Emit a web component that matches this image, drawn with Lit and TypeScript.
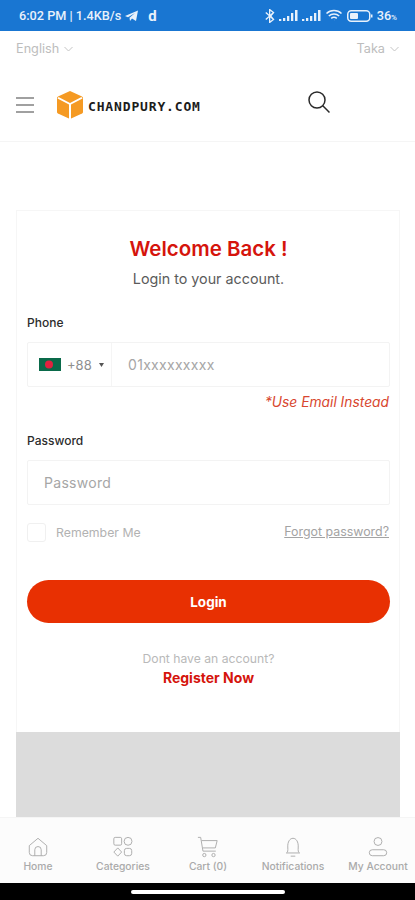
import { LitElement, css, html, svg } from 'lit';
import { customElement } from 'lit/decorators.js';

const navItems = [
  {
    label: 'Home',
    icon: svg`<path d="M2.500 10.500 12 2.500l9.500 8V18a3.500 3.500 0 0 1-3.500 3.500H6A3.500 3.500 0 0 1 2.500 18z"/><path d="M8.500 21.500V15a3.500 3.500 0 0 1 7 0v6.500"/>`,
  },
  {
    label: 'Categories',
    icon: svg`<rect x="2" y="1.500" width="8.500" height="8.500" rx="1.500"/><circle cx="17.500" cy="5.800" r="4.300"/><path d="M6.300 13 10.500 17.500 6.300 22 2 17.500z"/><rect x="13.500" y="13.500" width="8" height="8" rx="2.500"/>`,
  },
  {
    label: 'Cart (0)',
    icon: svg`<path d="M1 1.500h3l2.500 15h14M5 5h17l-2 8H6.500"/><circle cx="8" cy="20.800" r="1.800"/><circle cx="18" cy="20.800" r="1.800"/>`,
  },
  {
    label: 'Notifications',
    icon: svg`<path d="M4.800 18.500c1.700-.8 1.700-2.500 1.500-6.500C6 6.500 8.500 2.500 12 2.500s6 4 5.700 9.500c-.2 4-.2 5.700 1.500 6.500z"/><path d="M9.500 22h5"/>`,
  },
  {
    label: 'My Account',
    icon: svg`<circle cx="12" cy="6" r="4.300"/><rect x="2.500" y="15" width="19" height="6.500" rx="3.250"/>`,
  },
];

@customElement('app-root')
class AppRoot extends LitElement {
  static styles = css`
    :host {
      display: flex;
      flex-direction: column;
      width: 415px;
      height: 900px;
      overflow: hidden;
      background: #fff;
      font-family: Inter, 'Liberation Sans', sans-serif;
      color: #333;
    }

    .status {
      flex: none;
      height: 31px;
      box-sizing: border-box;
      padding: 0 18px 0 19px;
      display: flex;
      align-items: center;
      justify-content: space-between;
      background: #1976d2;
      color: #e8f1fb;
      font-family: Roboto, sans-serif;
      font-size: 12.7px;
      font-weight: 500;
    }

    .status-left,
    .status-right {
      display: flex;
      align-items: center;
    }

    .status-left {
      gap: 4px;
    }

    .status-right {
      gap: 4px;
    }

    .status svg {
      display: block;
      fill: currentColor;
    }

    .app-d {
      margin-left: 6px;
      font-size: 15px;
      font-weight: 700;
    }

    .topbar {
      flex: none;
      height: 35px;
      box-sizing: border-box;
      padding: 0 16px;
      display: flex;
      align-items: center;
      justify-content: space-between;
      color: #bdbdbd;
      font-size: 12.7px;
    }

    .picker {
      display: flex;
      align-items: center;
      gap: 5px;
    }

    .chev {
      display: block;
      fill: none;
      stroke: #c4c4c4;
      stroke-width: 1;
    }

    .header {
      flex: none;
      height: 76px;
      box-sizing: border-box;
      padding: 2px 0 0 16px;
      display: flex;
      align-items: center;
      border-bottom: 1px solid #f5f5f5;
    }

    .burger {
      width: 18px;
      display: flex;
      flex-direction: column;
      gap: 5px;
    }

    .burger i {
      display: block;
      height: 2px;
      background: #a0a0a0;
    }

    .logo {
      display: block;
      margin-left: 23px;
    }

    .brand {
      margin: 3px 0 0 5px;
      font-family: 'DejaVu Sans Mono', monospace;
      font-size: 13px;
      font-weight: 700;
      letter-spacing: 0.850px;
      color: #1c1c1c;
    }

    .search {
      display: block;
      margin: 0 0 5px 106px;
      fill: none;
      stroke: #2a2a2a;
      stroke-width: 1.500;
    }

    .page {
      flex: 1;
      min-height: 0;
      box-sizing: border-box;
      padding: 68px 15px 0 16px;
      display: flex;
      flex-direction: column;
    }

    .card {
      flex: 1;
      display: flex;
      flex-direction: column;
      border: 1px solid #f6f6f6;
      border-bottom: none;
    }

    .form {
      flex: 1;
      padding: 25px 9px 0 10px;
      display: flex;
      flex-direction: column;
    }

    h1 {
      margin: 0;
      text-align: center;
      font-size: 20.500px;
      line-height: 26px;
      font-weight: 600;
      color: #d5140c;
    }

    .sub {
      margin-top: 7px;
      text-align: center;
      font-size: 14.300px;
      line-height: 20px;
      color: #5b5b5b;
    }

    label {
      display: block;
      font-size: 12px;
      line-height: 16px;
      font-weight: 500;
      color: #2c2c2c;
    }

    .phone-label {
      margin-top: 26px;
    }

    .pass-label {
      margin-top: 22px;
    }

    .field {
      margin-top: 11px;
      height: 45px;
      box-sizing: border-box;
      display: flex;
      align-items: center;
      border: 1px solid #f3f3f3;
      border-radius: 2px;
      font-size: 14px;
      color: #a6a6a6;
    }

    .dial {
      width: 84px;
      height: 100%;
      box-sizing: border-box;
      padding-left: 11px;
      display: flex;
      align-items: center;
      gap: 6px;
      border-right: 1px solid #f5f5f5;
      font-size: 13px;
      color: #8f8f8f;
    }

    .flag {
      display: block;
      flex: none;
    }

    .caret {
      display: block;
      margin-left: 1px;
      fill: #555;
    }

    .field-text {
      padding-left: 16px;
      letter-spacing: 0.300px;
    }

    .email {
      margin-top: 6px;
      padding-right: 1px;
      text-align: right;
      font-size: 13.800px;
      line-height: 18px;
      font-style: italic;
      color: #d8472f;
    }

    .row {
      margin-top: 18px;
      display: flex;
      align-items: center;
    }

    .check {
      width: 17px;
      height: 17px;
      border: 1px solid #f0f0f0;
      border-radius: 3px;
    }

    .remember {
      margin-left: 10px;
      font-size: 12.300px;
      color: #b2b2b2;
    }

    .forgot {
      margin: -3px 1px 0 auto;
      font-size: 12.400px;
      color: #a3a3a3;
      text-decoration: underline;
    }

    .login {
      margin-top: 38px;
      height: 43px;
      display: flex;
      align-items: center;
      justify-content: center;
      border-radius: 22px;
      background: #e83002;
      color: #fff;
      font-size: 13.500px;
      font-weight: 700;
    }

    .noacc {
      margin-top: 28px;
      text-align: center;
      font-size: 12.200px;
      line-height: 16px;
      color: #b9b9b9;
    }

    .register {
      margin-top: 2px;
      text-align: center;
      font-size: 14px;
      line-height: 18px;
      font-weight: 700;
      color: #d5140c;
    }

    .banner {
      flex: none;
      height: 85px;
      margin: 0 -1px;
      background: #dcdcdc;
    }

    .nav {
      flex: none;
      height: 66px;
      box-sizing: border-box;
      padding: 18px 0 0 1px;
      display: flex;
      justify-content: center;
      background: #fcfcfc;
      border-top: 1px solid #f5f5f5;
    }

    .nav-item {
      flex: none;
      width: 85px;
      display: flex;
      flex-direction: column;
      align-items: center;
      gap: 2px;
      font-size: 10.300px;
      font-weight: 500;
      line-height: 12px;
      color: #aaaaaa;
      white-space: nowrap;
    }

    .nav-item svg {
      display: block;
      fill: none;
      stroke: #a8a8a8;
      stroke-width: 1;
    }

    .gesture {
      flex: none;
      height: 17px;
      display: flex;
      align-items: center;
      justify-content: center;
      background: #000;
    }

    .gesture i {
      display: block;
      width: 154px;
      height: 4px;
      border-radius: 2px;
      background: #fff;
    }
  `;

  render() {
    return html`
      <div class="status">
        <div class="status-left">
          <span>6:02 PM | 1.4KB/s</span>
          <svg width="13" height="12" viewBox="0 0 13 12"><path d="M0 6 13 .5 11 11 7 8.500 5 11 4.500 7.800 10 3 3 7.200z"/></svg>
          <span class="app-d">d</span>
        </div>
        <div class="status-right">
          <svg width="10" height="14" viewBox="0 0 10 14"><path d="M4 0h1l4.500 3.500L6.500 7l3 3.500L5 14H4V8.500L1.300 11 .3 10l3.500-3L.3 4l1-1L4 5.500zM5.300 2v3.500l2.300-2zm0 6.500V12l2.300-1.500z"/></svg>
          <svg width="19" height="11" viewBox="0 0 19 11"><path d="M0 9h2.300v2H0zM4 8h2.300v3H4zM8 6h2.300v5H8zM12 3h2.300v8H12zM16 0h2.500v11H16z"/></svg>
          <svg width="19" height="11" viewBox="0 0 19 11"><path d="M0 9h2.300v2H0zM4 8h2.300v3H4zM8 6h2.300v5H8zM12 3h2.300v8H12zM16 0h2.500v11H16z"/></svg>
          <svg width="18" height="13" viewBox="0 0 17 13" style="fill:none;stroke:currentColor;stroke-width:1.500"><path d="M1 4.500c4-4 11-4 15 0M3.300 7c3-2.800 7.400-2.800 10.400 0M5.700 9.400c1.600-1.400 4-1.400 5.600 0"/><path d="M8.500 11h.1"/></svg>
          <svg width="26" height="12" viewBox="0 0 26 12"><rect x=".75" y=".75" width="22" height="10.500" rx="3.500" fill="none" stroke="currentColor" stroke-width="1.500"/><rect x="3" y="3" width="8" height="6" rx="1"/><path d="M24 4.500h1.500v3H24z"/></svg>
          <span>36<small style="font-size:8px">%</small></span>
        </div>
      </div>

      <div class="topbar">
        <div class="picker">
          English
          <svg class="chev" width="9" height="6" viewBox="0 0 9 6"><path d="M.5 1l4 4 4-4"/></svg>
        </div>
        <div class="picker">
          Taka
          <svg class="chev" width="9" height="6" viewBox="0 0 9 6"><path d="M.5 1l4 4 4-4"/></svg>
        </div>
      </div>

      <div class="header">
        <div class="burger"><i></i><i></i><i></i></div>
        <svg class="logo" width="26" height="28" viewBox="0 0 26 28">
          <path d="M13 0 25 5.500Q26 6 26 7v14q0 1-1 1.500L13 28 1 22.500Q0 22 0 21V7q0-1 1-1.500z" fill="#f59a23"/>
          <path d="M1.500 6 13 12 24.500 6l1 1.500L14 13.500V28h-2V13.500L.5 7.500z" fill="#fff"/>
          <path d="M13 2.500 20 6l-7 3.500L6 6z" fill="#f59a23"/>
        </svg>
        <span class="brand">CHANDPURY.COM</span>
        <svg class="search" width="24" height="24" viewBox="0 0 24 24">
          <circle cx="10" cy="10" r="8"/>
          <path d="M15.800 15.800 22.500 22.500"/>
        </svg>
      </div>

      <div class="page">
        <div class="card">
          <div class="form">
            <h1>Welcome Back !</h1>
            <div class="sub">Login to your account.</div>

            <label class="phone-label">Phone</label>
            <div class="field">
              <div class="dial">
                <svg class="flag" width="22" height="13" viewBox="0 0 22 13">
                  <rect width="22" height="13" fill="#0a6a4a"/>
                  <circle cx="10" cy="6.500" r="4" fill="#e0213f"/>
                </svg>
                +88
                <svg class="caret" width="5" height="4" viewBox="0 0 5 4"><path d="M0 0h5L2.500 4z"/></svg>
              </div>
              <span class="field-text">01xxxxxxxxx</span>
            </div>
            <div class="email">*Use Email Instead</div>

            <label class="pass-label">Password</label>
            <div class="field">
              <span class="field-text">Password</span>
            </div>

            <div class="row">
              <div class="check"></div>
              <span class="remember">Remember Me</span>
              <span class="forgot">Forgot password?</span>
            </div>

            <div class="login">Login</div>
            <div class="noacc">Dont have an account?</div>
            <div class="register">Register Now</div>
          </div>
          <div class="banner"></div>
        </div>
      </div>

      <div class="nav">
        ${navItems.map(
          (item) => html`
            <div class="nav-item">
              <svg width="22" height="22" viewBox="0 0 24 24">${item.icon}</svg>
              <span>${item.label}</span>
            </div>
          `
        )}
      </div>

      <div class="gesture"><i></i></div>
    `;
  }
}

export default AppRoot;
